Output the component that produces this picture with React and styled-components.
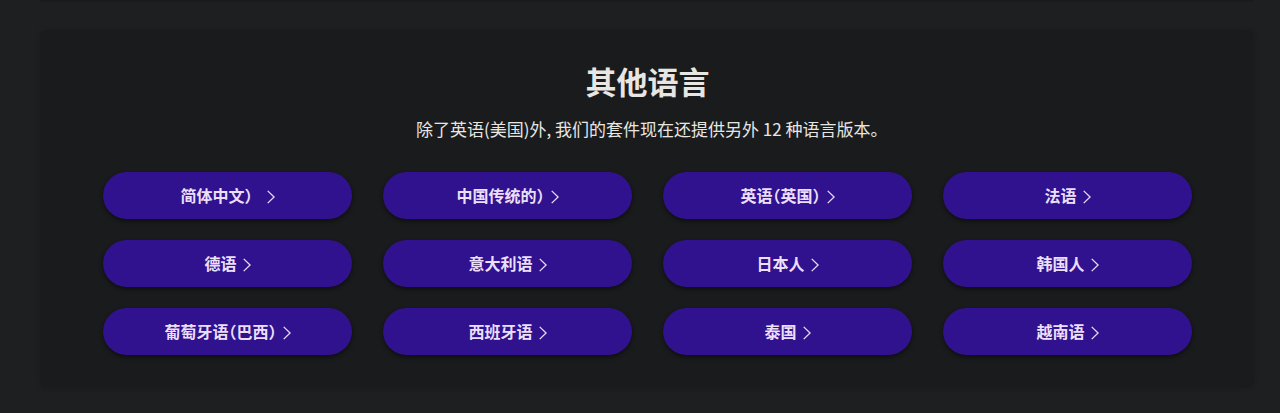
import React from 'react';
import styled, { createGlobalStyle } from 'styled-components';

const GlobalStyle = createGlobalStyle`
  *, *::before, *::after { box-sizing: border-box; }
  body {
    margin: 0;
    background: #1d1f20;
    color: #e8e6e3;
    font-family: "Noto Sans CJK SC", sans-serif;
  }
`;

const Page = styled.div`
  padding: 0 26px 24px 40px;
`;

const PreviousPanel = styled.div`
  height: 2px;
  margin-bottom: 28px;
  border-radius: 0 0 8px 8px;
  background: #1a1b1d;
`;

const Panel = styled.section`
  padding: 28px 62px 33px 63px;
  border-radius: 8px;
  background: #191b1c;
  box-shadow: 0 0 4px rgba(24, 26, 27, 0.4);
`;

const Title = styled.h2`
  margin: 0;
  font-size: 31px;
  line-height: 46px;
  font-weight: 700;
  text-align: center;
`;

const Intro = styled.p`
  margin: 13px 0 31px;
  font-size: 17px;
  line-height: 24px;
  text-align: center;
  font-feature-settings: "halt";
`;

const LanguageGrid = styled.nav`
  display: grid;
  grid-template-columns: repeat(4, 1fr);
  gap: 21px 31px;
`;

const LanguageLink = styled.a`
  display: flex;
  align-items: center;
  justify-content: center;
  gap: 6px;
  height: 47px;
  padding-bottom: 2px;
  border-radius: 24px;
  background: #31128e;
  box-shadow: 0 2px 4px rgba(0, 0, 0, 0.5);
  color: #ebdffa;
  font-size: 16px;
  line-height: 24px;
  font-weight: 700;
  text-decoration: none;
`;

const Label = styled.span`
  font-feature-settings: ${(p) => (p.$fullWidth ? 'normal' : '"halt"')};
`;

const Chevron = styled.svg`
  flex: none;
  margin-top: 5px;
`;

const languages = [
  { name: '简体中文）', fullWidth: true },
  { name: '中国传统的）' },
  { name: '英语（英国）' },
  { name: '法语' },
  { name: '德语' },
  { name: '意大利语' },
  { name: '日本人' },
  { name: '韩国人' },
  { name: '葡萄牙语（巴西）' },
  { name: '西班牙语' },
  { name: '泰国' },
  { name: '越南语' },
];

export default function App() {
  return (
    <Page lang="zh-CN">
      <GlobalStyle />
      <PreviousPanel />
      <Panel>
        <Title>其他语言</Title>
        <Intro>除了英语(美国)外, 我们的套件现在还提供另外 12 种语言版本。</Intro>
        <LanguageGrid aria-label="其他语言">
          {languages.map(({ name, fullWidth }) => (
            <LanguageLink key={name} href="#">
              <Label $fullWidth={fullWidth}>{name}</Label>
              <Chevron width="8" height="14" viewBox="0 0 8 14" fill="none" aria-hidden="true">
                <path d="M0.7 0.9 L7.1 7 L0.7 13.1" stroke="currentColor" strokeWidth="1.3" />
              </Chevron>
            </LanguageLink>
          ))}
        </LanguageGrid>
      </Panel>
    </Page>
  );
}
